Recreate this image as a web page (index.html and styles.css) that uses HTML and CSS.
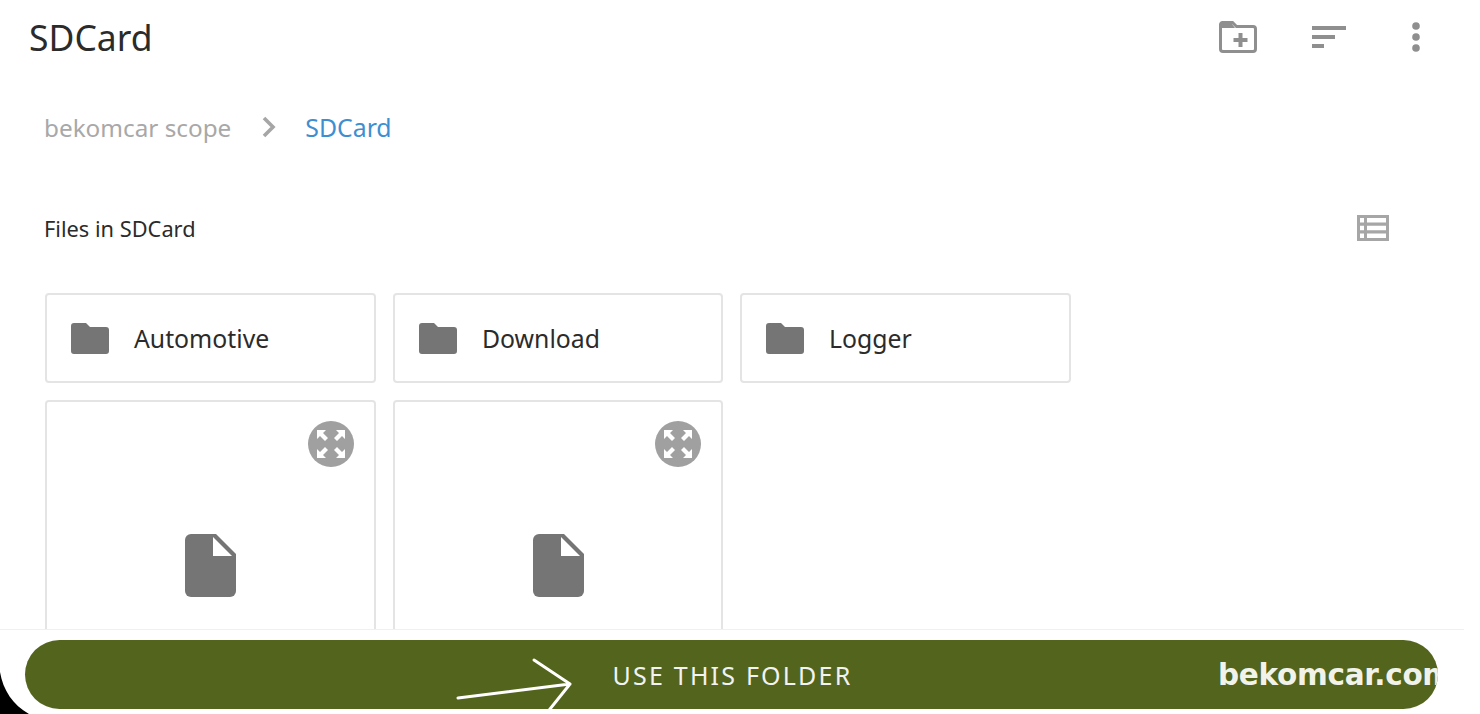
FILE: index.html
```html
<!DOCTYPE html>
<html lang="en">
<head>
    <meta charset="UTF-8">
    <meta name="viewport" content="width=device-width, initial-scale=1.0">
    <title>SDCard</title>
    <link rel="stylesheet" href="styles.css">
</head>
<body>
    <div class="page">
        <div class="header">
            <h1>SDCard</h1>
            <div class="header-icons">
                <svg class="icon-new" width="38" height="32" viewBox="0 0 38 32">
                    <path d="M3.500 1.500h10l4 4h16.500a2.500 2.500 0 0 1 2.500 2.500v20a2.500 2.500 0 0 1-2.500 2.500H4a2.500 2.500 0 0 1-2.500-2.500V3.500a2 2 0 0 1 2-2z" fill="none" stroke="#8f8f8f" stroke-width="3"/>
                    <path d="M2 3h11l3 4H2z" fill="#8f8f8f"/>
                    <path d="M19.500 12h4v5h5v4h-5v5h-4v-5h-5v-4h5z" fill="#8f8f8f"/>
                </svg>
                <svg class="icon-sort" width="35" height="22" viewBox="0 0 35 22">
                    <rect x="0" y="0" width="34" height="4" fill="#8f8f8f"/>
                    <rect x="0" y="9" width="23" height="4" fill="#8f8f8f"/>
                    <rect x="0" y="18" width="12" height="4" fill="#8f8f8f"/>
                </svg>
                <svg class="icon-more" width="8" height="30" viewBox="0 0 8 30">
                    <circle cx="4" cy="4" r="3.800" fill="#8f8f8f"/>
                    <circle cx="4" cy="15" r="3.800" fill="#8f8f8f"/>
                    <circle cx="4" cy="26" r="3.800" fill="#8f8f8f"/>
                </svg>
            </div>
        </div>

        <div class="breadcrumb">
            <span class="crumb">bekomcar scope</span>
            <svg class="crumb-arrow" width="14" height="22" viewBox="0 0 14 22">
                <path d="M2 2l9 9-9 9" fill="none" stroke="#a6a6a6" stroke-width="3.600"/>
            </svg>
            <span class="crumb-current">SDCard</span>
        </div>

        <div class="section-title">
            <span>Files in SDCard</span>
            <svg width="32" height="26" viewBox="0 0 32 26">
                <path d="M0 0h32v26H0z M3 3v4.500h4V3z M10 3v4.500h19V3z M3 10.700v4.600h4v-4.600z M10 10.700v4.600h19v-4.600z M3 18.500V23h4v-4.500z M10 18.500V23h19v-4.500z" fill="#a6a6a6" fill-rule="evenodd"/>
            </svg>
        </div>

        <div class="file-grid">
            <div class="card folder-card">
                <svg width="38" height="31" viewBox="0 0 38 31"><path d="M3 0h12l4 4h16a3 3 0 0 1 3 3v21a3 3 0 0 1-3 3H3a3 3 0 0 1-3-3V3a3 3 0 0 1 3-3z" fill="#757575"/></svg>
                <span>Automotive</span>
            </div>
            <div class="card folder-card">
                <svg width="38" height="31" viewBox="0 0 38 31"><path d="M3 0h12l4 4h16a3 3 0 0 1 3 3v21a3 3 0 0 1-3 3H3a3 3 0 0 1-3-3V3a3 3 0 0 1 3-3z" fill="#757575"/></svg>
                <span>Download</span>
            </div>
            <div class="card folder-card">
                <svg width="38" height="31" viewBox="0 0 38 31"><path d="M3 0h12l4 4h16a3 3 0 0 1 3 3v21a3 3 0 0 1-3 3H3a3 3 0 0 1-3-3V3a3 3 0 0 1 3-3z" fill="#757575"/></svg>
                <span>Logger</span>
            </div>
            <div class="card file-card">
                <svg class="expand" width="46" height="46" viewBox="0 0 46 46">
                    <circle cx="23" cy="23" r="23" fill="#a0a0a0"/>
                    <path d="M9 9h9l-3 3 5 5-3 3-5-5-3 3z M37 9v9l-3-3-5 5-3-3 5-5-3-3z M9 37v-9l3 3 5-5 3 3-5 5 3 3z M37 37h-9l3-3-5-5 3-3 5 5 3-3z" fill="#fff"/>
                </svg>
                <svg class="doc" width="51" height="63" viewBox="0 0 51 63">
                    <path d="M6 0h25l20 20v37a6 6 0 0 1-6 6H6a6 6 0 0 1-6-6V6a6 6 0 0 1 6-6z" fill="#757575"/>
                    <path d="M28 3l19 19H28z" fill="#fff"/>
                </svg>
            </div>
            <div class="card file-card">
                <svg class="expand" width="46" height="46" viewBox="0 0 46 46">
                    <circle cx="23" cy="23" r="23" fill="#a0a0a0"/>
                    <path d="M9 9h9l-3 3 5 5-3 3-5-5-3 3z M37 9v9l-3-3-5 5-3-3 5-5-3-3z M9 37v-9l3 3 5-5 3 3-5 5 3 3z M37 37h-9l3-3-5-5 3-3 5 5 3-3z" fill="#fff"/>
                </svg>
                <svg class="doc" width="51" height="63" viewBox="0 0 51 63">
                    <path d="M6 0h25l20 20v37a6 6 0 0 1-6 6H6a6 6 0 0 1-6-6V6a6 6 0 0 1 6-6z" fill="#757575"/>
                    <path d="M28 3l19 19H28z" fill="#fff"/>
                </svg>
            </div>
        </div>
    </div>

    <div class="footer">
        <button class="use-button">
            <span>USE THIS FOLDER</span>
            <span class="watermark">bekomcar.com</span>
            <svg class="arrow" width="120" height="69" viewBox="0 0 120 69">
                <path d="M2 58L114 44M78 20l36 24-24 30" fill="none" stroke="#fff" stroke-width="3" stroke-linecap="round" stroke-linejoin="round"/>
            </svg>
        </button>
        <svg class="corner" width="30" height="42" viewBox="0 0 30 42">
            <path d="M0 0C3 18 13 33 29 42H0z" fill="#000"/>
        </svg>
    </div>
</body>
</html>
```

FILE: styles.css
```css
* {
    box-sizing: border-box;
}
html, body {
    height: 100%;
}
body {
    margin: 0;
    background-color: white;
    color: #2b2b2b;
    font-family: "Noto Sans", Arial, sans-serif;
    display: flex;
    flex-direction: column;
    overflow: hidden;
}
.page {
    flex: 1;
    min-height: 0;
    overflow: hidden;
    padding-left: 45px;
    padding-right: 16px;
}
.header {
    height: 74px;
    margin-left: -16px;
    display: flex;
    justify-content: space-between;
    align-items: center;
}
.header h1 {
    margin: 0;
    font-size: 35.500px;
    font-weight: 400;
}
.header-icons {
    display: flex;
    align-items: center;
    padding-right: 44px;
}
.icon-sort {
    margin-left: 55px;
}
.icon-more {
    margin-left: 65px;
}
.breadcrumb {
    margin-top: 33px;
    margin-left: -1px;
    height: 40px;
    display: flex;
    align-items: center;
    font-size: 24.300px;
}
.crumb {
    color: #a8a8a8;
}
.crumb-arrow {
    margin: 0 29px 0 31px;
}
.crumb-current {
    color: #3d8fd1;
    font-size: 24.800px;
}
.section-title {
    margin-top: 60px;
    padding-right: 75px;
    height: 42px;
    display: flex;
    justify-content: space-between;
    align-items: center;
    font-size: 21.800px;
}
.section-title span {
    margin-left: -1px;
}
.file-grid {
    margin-top: 44px;
    display: grid;
    grid-template-columns: 331px 330px 331px;
    grid-auto-rows: min-content;
    gap: 17px;
}
.card {
    border: 2px solid #e4e4e4;
    border-radius: 4px;
    background-color: white;
}
.folder-card {
    height: 90px;
    padding-left: 24px;
    display: flex;
    align-items: center;
    gap: 25px;
    font-size: 24.800px;
}
.file-card {
    height: 300px;
    position: relative;
    display: flex;
    justify-content: center;
    padding-top: 132px;
}
.expand {
    position: absolute;
    top: 19px;
    right: 20px;
}
.footer {
    position: relative;
    flex: none;
    height: 85px;
    width: 1464px;
    padding: 10px 26px 5px 25px;
    background-color: white;
    border-top: 1px solid #f0f0f0;
}
.use-button {
    position: relative;
    width: 100%;
    height: 100%;
    padding: 0 0 0 2px;
    border: none;
    border-radius: 35px;
    background-color: #53641d;
    color: #f2f2f2;
    font-family: "Noto Sans", Arial, sans-serif;
    font-size: 25px;
    letter-spacing: 2.200px;
    overflow: hidden;
}
.watermark {
    position: absolute;
    left: 1193px;
    top: 18px;
    white-space: nowrap;
    font-family: "DejaVu Sans", sans-serif;
    font-size: 29.500px;
    font-weight: 700;
    letter-spacing: -0.300px;
    color: #f1f3ea;
}
.arrow {
    position: absolute;
    left: 431px;
    top: 0;
}
.corner {
    position: absolute;
    left: 0;
    bottom: 0;
}
```
